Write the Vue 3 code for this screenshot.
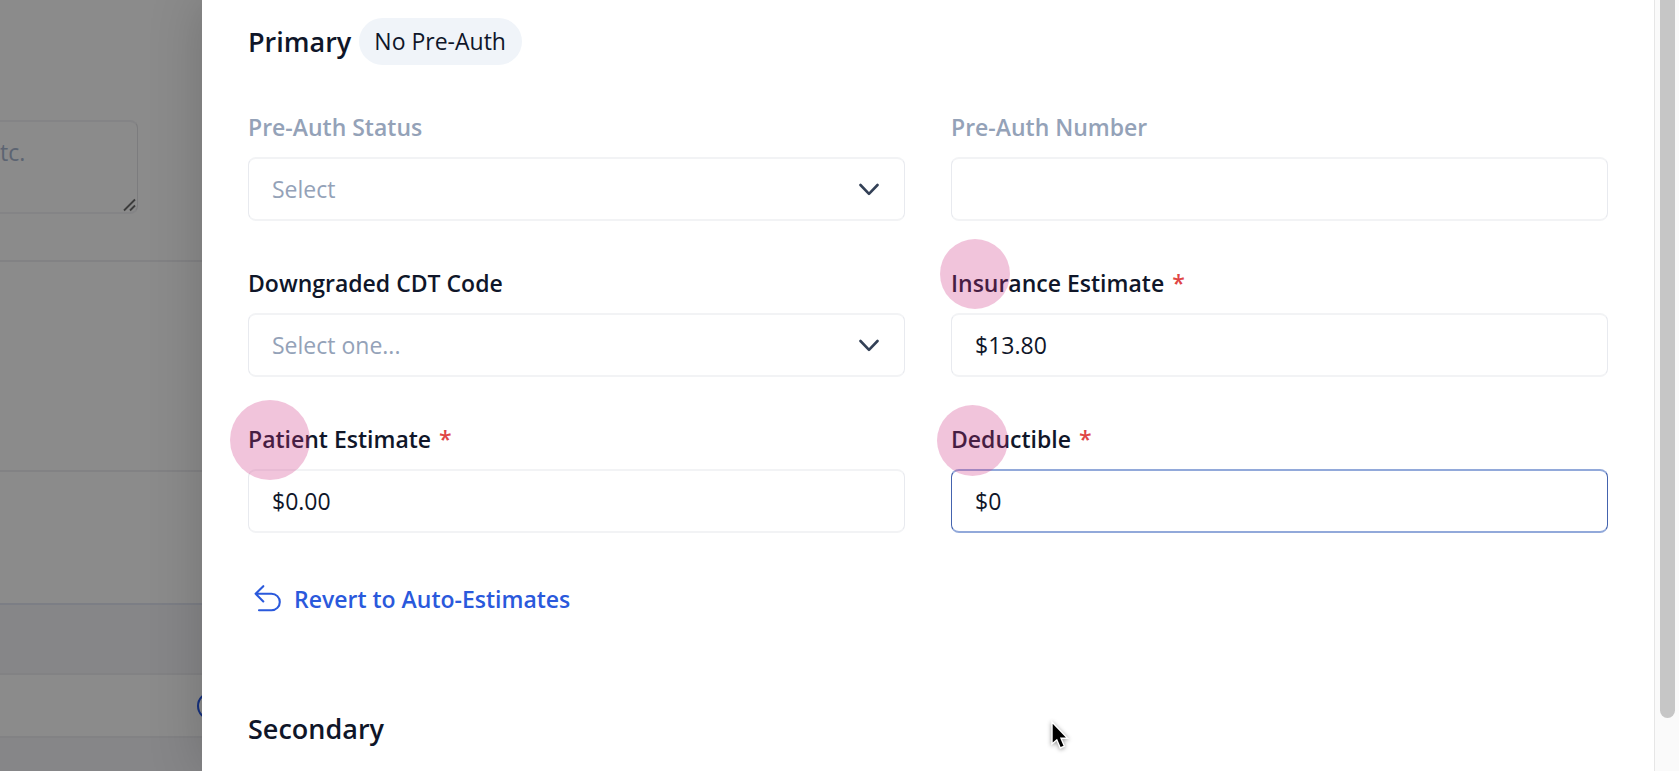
<script setup>
import { ref } from 'vue'

const status = ref('')
const authNumber = ref('')
const code = ref('')
const insurance = ref('$13.80')
const patient = ref('$0.00')
const deductible = ref('$0')
</script>

<template>
  <div class="page">
    <div class="backdrop" aria-hidden="true">
      <div class="row row-notes">
        <div class="note">
          <span>tc.</span>
          <svg class="grip" width="13" height="14" viewBox="0 0 13 14">
            <path d="M1 12.5 12 1.5M7 12.5 12 7.5" />
          </svg>
        </div>
      </div>
      <div class="row row-a"></div>
      <div class="row row-b"></div>
      <div class="row row-head"></div>
      <div class="row row-item"><span class="ring"></span></div>
      <div class="row row-last"></div>
    </div>

    <main class="panel">
      <div class="content">
        <header class="title-row">
          <h2>Primary</h2>
          <span class="pill">No Pre-Auth</span>
        </header>

        <form class="fields" @submit.prevent>
          <div class="field">
            <label class="muted" for="status">Pre-Auth Status</label>
            <div class="select-wrap">
              <select id="status" v-model="status" class="control">
                <option value="">Select</option>
              </select>
              <svg class="chevron" width="20" height="14" viewBox="0 0 20 14"><path d="M1.5 3 10 11.8 18.5 3" /></svg>
            </div>
          </div>
          <div class="field">
            <label class="muted" for="number">Pre-Auth Number</label>
            <input id="number" v-model="authNumber" class="control" type="text" />
          </div>
          <div class="field">
            <label for="code">Downgraded CDT Code</label>
            <div class="select-wrap">
              <select id="code" v-model="code" class="control">
                <option value="">Select one...</option>
              </select>
              <svg class="chevron" width="20" height="14" viewBox="0 0 20 14"><path d="M1.5 3 10 11.8 18.5 3" /></svg>
            </div>
          </div>
          <div class="field">
            <label for="insurance">Insurance Estimate <b>*</b></label>
            <input id="insurance" v-model="insurance" class="control" type="text" />
            <span class="spot spot-insurance"></span>
          </div>
          <div class="field">
            <label for="patient">Patient Estimate <b>*</b></label>
            <input id="patient" v-model="patient" class="control" type="text" />
            <span class="spot spot-patient"></span>
          </div>
          <div class="field">
            <label for="deductible">Deductible <b>*</b></label>
            <input id="deductible" v-model="deductible" class="control active" type="text" />
            <span class="spot spot-deductible"></span>
          </div>
        </form>

        <button class="revert" type="button">
          <svg width="28" height="28" viewBox="0 0 28 28">
            <path d="M10.3 1.2 2.6 8.7 10.3 16.4M2.6 8.7H18.5a8.3 8.3 0 0 1 0 16.6H6" />
          </svg>
          Revert to Auto-Estimates
        </button>

        <h2 class="secondary">Secondary</h2>
      </div>
      <div class="track"><div class="thumb"></div></div>
      <svg class="cursor" width="22" height="32" viewBox="0 0 22 32">
        <path d="M3 2V24L7.8 19.8 11.3 28 15.4 26.2 12 18.2H18.6Z" />
      </svg>
    </main>
  </div>
</template>

<style>
html,
body {
  margin: 0;
  overflow: hidden;
}
</style>

<style scoped>
* {
  box-sizing: border-box;
}

.page {
  display: flex;
  height: 100vh;
  overflow: hidden;
  font-family: "Open Sans", "Noto Sans", sans-serif;
  font-size: 23px;
  line-height: 32px;
  color: #0f1629;
}

.backdrop {
  width: 202px;
  flex: none;
  display: flex;
  flex-direction: column;
  background: #8b8b8b;
}

.row {
  flex: none;
  border-bottom: 2px solid #828284;
}

.row-notes {
  height: 262px;
  padding-top: 120px;
}

.note {
  position: relative;
  width: 138px;
  height: 94px;
  padding: 14px 0;
  border: 2px solid #848486;
  border-left: 0;
  border-right: 1px solid #7c7c7e;
  border-radius: 0 8px 8px 0;
  color: #5c6472;
}

.grip {
  position: absolute;
  right: 1px;
  bottom: 0;
  fill: none;
  stroke: #3c3c3c;
  stroke-width: 1.8;
}

.row-a {
  height: 210px;
}

.row-b {
  height: 133px;
  border-color: #7c7e85;
}

.row-head {
  height: 70px;
  background: #868688;
}

.row-item {
  height: 63px;
  display: flex;
  align-items: center;
  padding-left: 197px;
}

.ring {
  width: 28px;
  height: 28px;
  flex: none;
  border: 2px solid #15317f;
  border-radius: 50%;
}

.row-last {
  flex: 1;
  border: 0;
  background: #868688;
}

.panel {
  position: relative;
  flex: 1;
  min-width: 0;
  display: flex;
  background: #fff;
  box-shadow: 0 0 50px rgba(0, 0, 0, 0.18);
}

.content {
  flex: 1;
  min-width: 0;
  padding: 18px 46px 0;
}

.title-row {
  display: flex;
  align-items: flex-start;
  gap: 8px;
  margin-bottom: 45px;
}

h2 {
  margin: 0;
  font-size: 27px;
  line-height: 48px;
  font-weight: 600;
}

.pill {
  padding: 7px 16px 8px 15px;
  border-radius: 24px;
  background: #f0f4f9;
}

.fields {
  display: grid;
  grid-template-columns: 1fr 1fr;
  gap: 46px;
}

.field {
  position: relative;
  display: flex;
  flex-direction: column;
  gap: 14px;
}

label {
  font-weight: 600;
}

label b {
  margin-left: 2px;
  font-weight: 600;
  color: #e04545;
}

.muted {
  color: #94a2b8;
}

.control {
  width: 100%;
  height: 64px;
  margin: 0;
  padding: 0 23px;
  appearance: none;
  border-style: solid;
  border-width: 2px 1px;
  border-color: #f2f3f5 #e8eaef;
  border-radius: 8px;
  outline: none;
  background: #fff;
  color: #0f1629;
  font: inherit;
}

.control.active {
  border-color: #92a9da #4463ae;
}

.select-wrap {
  display: grid;
  align-items: center;
}

.select-wrap > * {
  grid-area: 1 / 1;
}

select.control {
  color: #94a2b8;
}

.chevron {
  justify-self: end;
  margin-right: 26px;
  pointer-events: none;
  fill: none;
  stroke: #334056;
  stroke-width: 2.6;
  stroke-linecap: round;
  stroke-linejoin: round;
}

.spot {
  position: absolute;
  border-radius: 50%;
  background: rgba(207, 52, 131, 0.29);
  pointer-events: none;
}

.spot-insurance {
  left: -11px;
  top: -28px;
  width: 70px;
  height: 70px;
}

.spot-patient {
  left: -18px;
  top: -23px;
  width: 80px;
  height: 80px;
}

.spot-deductible {
  left: -14px;
  top: -18px;
  width: 71px;
  height: 71px;
}

.revert {
  display: flex;
  align-items: center;
  gap: 13px;
  margin: 50px 0 90px;
  padding: 0 0 0 5px;
  border: 0;
  background: none;
  color: #2a59dc;
  font: inherit;
  font-weight: 600;
}

.revert svg {
  fill: none;
  stroke: currentColor;
  stroke-width: 2.1;
  stroke-linecap: round;
  stroke-linejoin: round;
}

.track {
  width: 25px;
  flex: none;
  padding-left: 5px;
  border-left: 1px solid #e6e6e6;
  background: #fafafa;
}

.thumb {
  width: 15px;
  height: 718px;
  border-radius: 0 0 8px 8px;
  background: #c6c6c6;
}

.cursor {
  position: absolute;
  left: 847px;
  top: 720px;
  fill: #000;
  stroke: #fff;
  stroke-width: 1.4;
  filter: drop-shadow(0 1px 2px rgba(0, 0, 0, 0.4));
}
</style>
